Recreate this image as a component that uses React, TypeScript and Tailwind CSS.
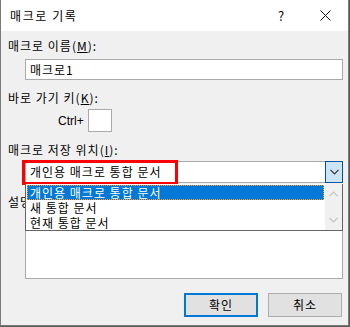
import React from 'react';

const font = { fontFamily: '"Noto Sans CJK KR", "Noto Sans", sans-serif' };

function Chevron({ up = false, color = '#333' }: { up?: boolean; color?: string }) {
  return (
    <svg width="9" height="6" viewBox="0 0 9 6" className={up ? 'rotate-180' : ''}>
      <path d="M0.5 0.8 L4.5 4.8 L8.5 0.8" fill="none" stroke={color} strokeWidth="1.2" />
    </svg>
  );
}

export default function App() {
  return (
    <div className="w-[350px] h-[327px] bg-[#5a5a5a]" style={font}>
      <div className="relative w-[349px] h-[326px] border border-t-0 border-[#7a7a7a] bg-[#f0f0f0] flex flex-col text-[12px] leading-[16px] tracking-[1px] text-black">
        {/* title bar */}
        <div className="h-[31px] bg-white flex items-center pl-[9px] shrink-0">
          <span className="flex-1 tracking-[1.6px]">매크로 기록</span>
          <span className="w-[10px] text-center mr-[34px] text-[13px] tracking-normal">?</span>
          <svg width="11" height="11" viewBox="0 0 11 11" className="mr-[17px]">
            <path d="M0.5 0.5 L10.5 10.5 M10.5 0.5 L0.5 10.5" stroke="#111" strokeWidth="1" />
          </svg>
        </div>

        <div className="mt-[7px] pl-[7px] h-[16px]">
          매크로 이름(<span className="underline">M</span>):
        </div>
        <div className="mt-[5px] ml-[24px] w-[318px] h-[21px] bg-white border border-[#a9a9a9] flex items-center pl-[4px]">
          매크로1
        </div>

        <div className="mt-[10px] pl-[7px] h-[16px]">
          바로 가기 키(<span className="underline">K</span>):
        </div>
        <div className="mt-[3px] flex items-center h-[23px]">
          <span className="ml-[57px] w-[30px] tracking-normal" style={{ fontFamily: '"Liberation Sans", sans-serif' }}>
            Ctrl+
          </span>
          <div className="w-[24px] h-[23px] bg-white border border-[#a9a9a9]" />
        </div>

        <div className="mt-[10px] pl-[7px] h-[16px]">
          매크로 저장 위치(<span className="underline">I</span>):
        </div>
        <div className="mt-[3px] ml-[24px] w-[318px] h-[22px] bg-white border border-[#a9a9a9] flex items-center">
          <span className="flex-1 pl-[4px]">개인용 매크로 통합 문서</span>
          <div className="w-[18px] h-[22px] -mr-px bg-[#cce4f7] border border-[#005499] flex items-center justify-center">
            <Chevron />
          </div>
        </div>

        <div className="mt-[11px] pl-[7px] h-[16px]">
          설명(<span className="underline">D</span>):
        </div>
        <div className="mt-[3px] ml-[24px] w-[318px] h-[66px] bg-white border border-[#a9a9a9]" />

        <div className="mt-[14px] flex justify-end gap-[10px] pr-[6px]">
          <button className="w-[74px] h-[24px] bg-[#e1e1e1] border-2 border-[#0078d7] tracking-[1px]">확인</button>
          <button className="w-[74px] h-[24px] bg-[#e1e1e1] border border-[#adadad] tracking-[1px]">취소</button>
        </div>

        {/* red highlight round the combobox */}
        <div className="absolute left-[21px] top-[160px] w-[156px] h-[25px] border-[3px] border-[#ff0000]" />

        {/* opened list */}
        <div className="absolute left-[24px] top-[184px] w-[318px] h-[47px] bg-white border border-t-0 border-[#646464] flex">
          <div className="flex-1 pt-[1px] pl-[1px] flex flex-col leading-[15px]">
            <div className="h-[15px] bg-[#0078d7] text-white border border-dotted border-[#ff9c33] pl-[2px] leading-[13px] mr-[1px]">
              개인용 매크로 통합 문서
            </div>
            <div className="h-[15px] pl-[3px]">새 통합 문서</div>
            <div className="h-[15px] pl-[3px]">현재 통합 문서</div>
          </div>
          <div className="w-[17px] bg-[#f0f0f0] flex flex-col items-center justify-between py-[7px]">
            <Chevron up color="#c2c2c2" />
            <Chevron color="#c2c2c2" />
          </div>
        </div>
      </div>
    </div>
  );
}
